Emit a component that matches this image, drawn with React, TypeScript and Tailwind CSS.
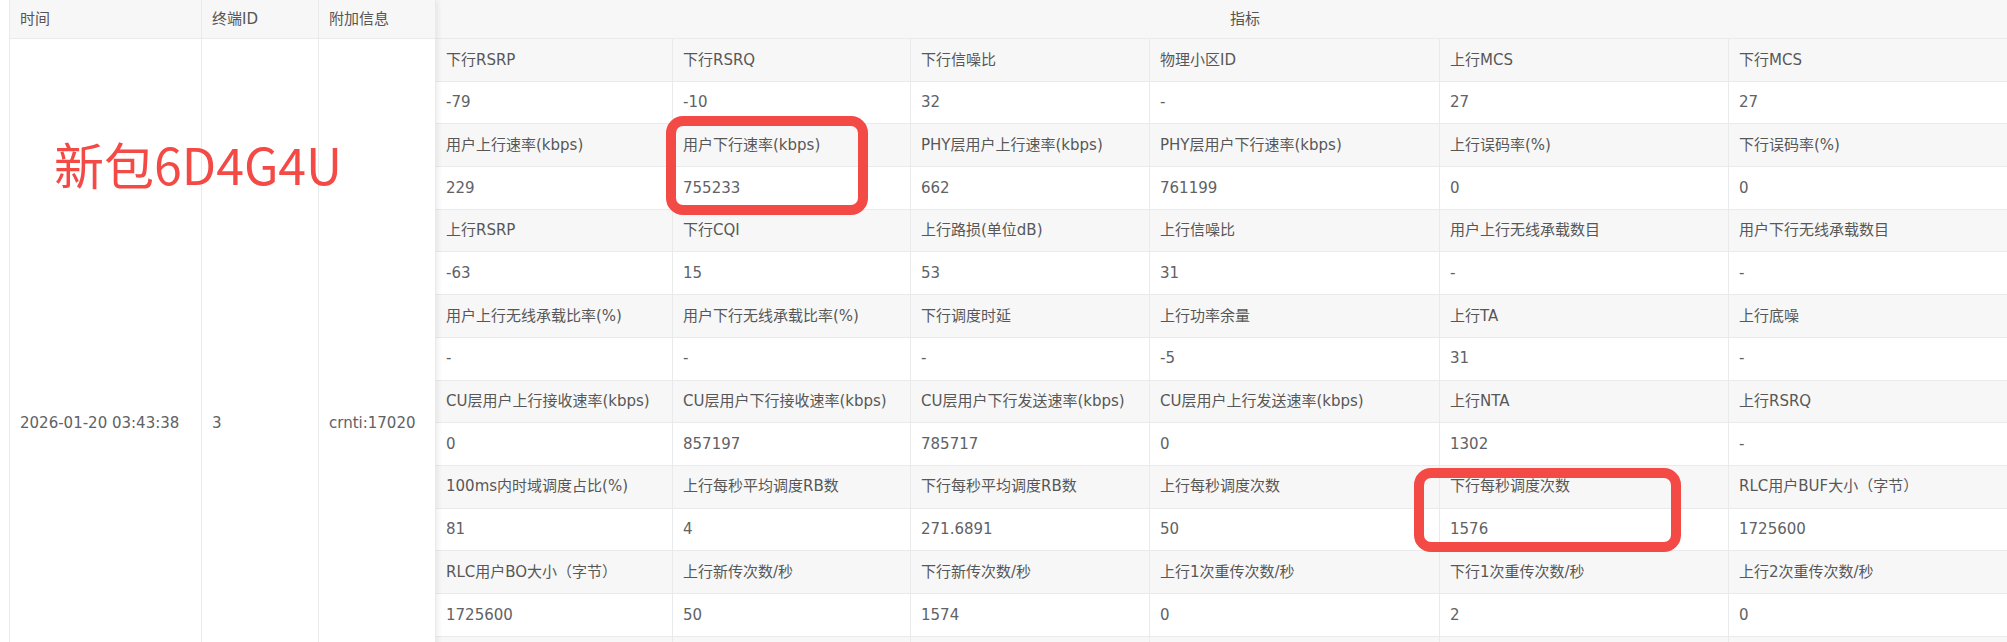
import React from 'react';

type Row = { labels: string[]; values: string[] };

const rows: Row[] = [
  {
    labels: ['下行RSRP', '下行RSRQ', '下行信噪比', '物理小区ID', '上行MCS', '下行MCS'],
    values: ['-79', '-10', '32', '-', '27', '27'],
  },
  {
    labels: ['用户上行速率(kbps)', '用户下行速率(kbps)', 'PHY层用户上行速率(kbps)', 'PHY层用户下行速率(kbps)', '上行误码率(%)', '下行误码率(%)'],
    values: ['229', '755233', '662', '761199', '0', '0'],
  },
  {
    labels: ['上行RSRP', '下行CQI', '上行路损(单位dB)', '上行信噪比', '用户上行无线承载数目', '用户下行无线承载数目'],
    values: ['-63', '15', '53', '31', '-', '-'],
  },
  {
    labels: ['用户上行无线承载比率(%)', '用户下行无线承载比率(%)', '下行调度时延', '上行功率余量', '上行TA', '上行底噪'],
    values: ['-', '-', '-', '-5', '31', '-'],
  },
  {
    labels: ['CU层用户上行接收速率(kbps)', 'CU层用户下行接收速率(kbps)', 'CU层用户下行发送速率(kbps)', 'CU层用户上行发送速率(kbps)', '上行NTA', '上行RSRQ'],
    values: ['0', '857197', '785717', '0', '1302', '-'],
  },
  {
    labels: ['100ms内时域调度占比(%)', '上行每秒平均调度RB数', '下行每秒平均调度RB数', '上行每秒调度次数', '下行每秒调度次数', 'RLC用户BUF大小（字节）'],
    values: ['81', '4', '271.6891', '50', '1576', '1725600'],
  },
  {
    labels: ['RLC用户BO大小（字节）', '上行新传次数/秒', '下行新传次数/秒', '上行1次重传次数/秒', '下行1次重传次数/秒', '上行2次重传次数/秒'],
    values: ['1725600', '50', '1574', '0', '2', '0'],
  },
];

const fontStack = { fontFamily: '"DejaVu Sans", "Noto Sans CJK SC", sans-serif' };

const App: React.FC = () => {
  return (
    <div className="relative h-[642px] w-[2007px] overflow-hidden bg-white text-[15px]" style={fontStack}>
      <div className="ml-[9px] flex w-[2050px]">
        {/* fixed columns, the body cell spans every indicator row */}
        <div className="relative z-10 flex flex-col border-l border-[#e8eaec] bg-white shadow-[3px_0_5px_-1px_rgba(0,0,0,0.07)]">
          <div className="flex h-[39px] border-b border-[#e8eaec] bg-[#f7f7f8] text-[#555]">
            <div className="flex w-[192px] items-center border-r border-[#e8eaec] pl-[10px]">时间</div>
            <div className="flex w-[117px] items-center border-r border-[#e8eaec] pl-[10px]">终端ID</div>
            <div className="flex w-[117px] items-center border-r border-[#e8eaec] pl-[10px]">附加信息</div>
          </div>
          <div className="flex h-[768.6px] text-[#606266]">
            <div className="flex w-[192px] items-center border-r border-[#e8eaec] pl-[10px] whitespace-nowrap">2026-01-20 03:43:38</div>
            <div className="flex w-[117px] items-center border-r border-[#e8eaec] pl-[10px]">3</div>
            <div className="flex w-[117px] items-center border-r border-[#e8eaec] pl-[10px]">crnti:17020</div>
          </div>
        </div>

        {/* indicators */}
        <div className="flex w-[1618px] flex-col">
          <div className="flex h-[39px] items-center justify-center border-b border-[#e8eaec] bg-[#f7f7f8] text-[#555]">
            指标
          </div>
          <div className="grid grid-cols-[237px_238px_239px_290px_289px_325px] auto-rows-[42.7px]">
            {rows.map((row, i) => (
              <React.Fragment key={i}>
                {row.labels.map((label, j) => (
                  <div
                    key={`l${i}-${j}`}
                    className="flex items-center whitespace-nowrap border-b border-r border-[#e8eaec] bg-[#f7f7f8] pl-[10px] text-[#575757]"
                  >
                    {label}
                  </div>
                ))}
                {row.values.map((value, j) => (
                  <div
                    key={`v${i}-${j}`}
                    className="flex items-center whitespace-nowrap border-b border-r border-[#e8eaec] bg-white pl-[10px] text-[#606266]"
                  >
                    {value}
                  </div>
                ))}
              </React.Fragment>
            ))}
            {/* next label row, only its top edge shows */}
            {[0, 1, 2, 3, 4, 5].map((j) => (
              <div key={`n${j}`} className="border-b border-r border-[#e8eaec] bg-[#f7f7f8]" />
            ))}
          </div>
        </div>
      </div>

      {/* red annotations over the table */}
      <div
        className="absolute left-[54px] top-[138px] z-20 whitespace-nowrap text-[50px] leading-none text-[#f34a46]"
        style={{ fontFamily: '"Noto Sans CJK SC", sans-serif' }}
      >
        新包6D4G4U
      </div>
      <div className="absolute left-[666px] top-[116px] z-20 h-[99px] w-[202px] rounded-[17px] border-[10px] border-[#f34a46]" />
      <div className="absolute left-[1414px] top-[468px] z-20 h-[84px] w-[267px] rounded-[17px] border-[10px] border-[#f34a46]" />
    </div>
  );
};

export default App;
